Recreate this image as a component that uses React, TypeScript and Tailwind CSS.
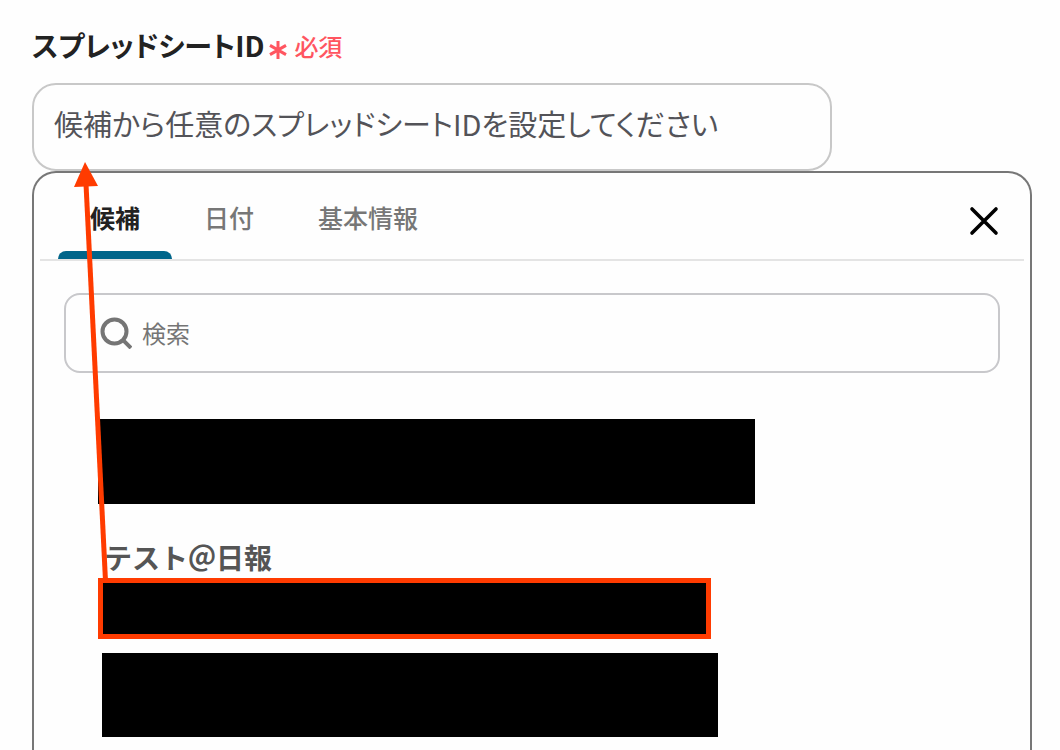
import React, { useState } from 'react';

const tabs = ['候補', '日付', '基本情報'];

const SearchIcon: React.FC = () => (
  <svg className="size-8 shrink-0 text-[#757575]" viewBox="0 0 32 32" fill="none" stroke="currentColor" strokeWidth="4" aria-hidden="true">
    <circle cx="14.5" cy="14.5" r="12" />
    <path d="M22.6 22.6 L31 31" />
  </svg>
);

const CloseIcon: React.FC = () => (
  <svg className="size-8" viewBox="0 0 32 32" fill="none" stroke="currentColor" strokeWidth="3.6" strokeLinecap="round" aria-hidden="true">
    <path d="M4 4 L28 28 M28 4 L4 28" />
  </svg>
);

const RequiredMark: React.FC = () => (
  <svg className="mt-2 size-5" viewBox="0 0 20 20" fill="none" stroke="currentColor" strokeWidth="3" aria-hidden="true">
    <path d="M10 1 V19 M2 5.4 L18 14.6 M18 5.4 L2 14.6" />
  </svg>
);

// Points from the highlighted candidate up to the ID field
const Arrow: React.FC = () => (
  <svg className="pointer-events-none absolute left-[72px] top-40 z-10" width="40" height="424" viewBox="0 0 40 424" aria-hidden="true">
    <path d="M14 24 L33.5 421" stroke="#ff3b00" strokeWidth="5" />
    <path d="M13 2 L2 27 L26 26 Z" fill="#ff3b00" />
  </svg>
);

const App: React.FC = () => {
  const [active, setActive] = useState('候補');

  return (
    <main className="relative flex h-screen flex-col overflow-hidden bg-[#fefefe] pl-8 pr-7 pt-6 font-['Noto_Sans_CJK_JP',sans-serif]">
      <Arrow />

      {/* Field label */}
      <div className="flex h-11 items-center gap-1">
        <label htmlFor="sheet-id" className="pb-0.5 text-[28px] leading-10 font-bold text-[#222] [font-feature-settings:'palt']">
          スプレッドシートID
        </label>
        <span className="flex items-center gap-1.5 text-2xl font-medium text-[#ff5560]">
          <RequiredMark />
          必須
        </span>
      </div>

      <input
        id="sheet-id"
        type="text"
        placeholder="候補から任意のスプレッドシートIDを設定してください"
        className="mt-[15px] h-[88px] w-4/5 shrink-0 rounded-3xl border-2 border-[#c8c8c8] px-5 pb-2 text-[29px] text-[#535358] outline-none placeholder:text-[#535358] [font-feature-settings:'palt']"
      />

      {/* Candidate panel */}
      <section className="min-h-0 flex-1 rounded-t-3xl border-2 border-b-0 border-[#777]">
        <div className="mx-1.5 flex items-stretch justify-between border-b-2 border-[#e4e4e4] pl-[18px] pr-6">
          <div role="tablist" className="flex">
            {tabs.map((tab) => (
              <button
                key={tab}
                type="button"
                role="tab"
                aria-selected={active === tab}
                onClick={() => setActive(tab)}
                className={`flex h-[86px] flex-col text-[25px] ${active === tab ? 'font-bold text-[#222]' : 'font-medium text-[#777]'}`}
              >
                <span className="flex flex-1 items-center px-8 pt-3">{tab}</span>
                <span className={`h-2 w-full rounded-t-lg ${active === tab ? 'bg-[#00658a]' : ''}`} />
              </button>
            ))}
          </div>
          <button type="button" aria-label="閉じる" className="pt-2.5 text-black">
            <CloseIcon />
          </button>
        </div>

        <div className="mx-[30px] mt-8 flex h-20 items-center gap-2.5 rounded-2xl border-2 border-[#c8c8cb] px-[34px]">
          <SearchIcon />
          <input
            type="search"
            aria-label="検索"
            placeholder="検索"
            className="min-w-0 flex-1 text-2xl text-[#757575] outline-none placeholder:text-[#757575]"
          />
        </div>

        {/* Candidates, with the account details masked */}
        <ul className="mt-[46px] pl-16">
          <li className="h-[85px] w-[657px] max-w-full bg-black" />
          <li className="pt-8">
            <p className="pl-1.5 text-[28px] leading-[42px] font-bold text-[#555]">テスト＠日報</p>
            <div className="h-[61px] w-[613px] max-w-full border-5 border-[#ff3b00] bg-black" />
          </li>
          <li className="ml-1 mt-3.5 h-[84px] w-[616px] max-w-full bg-black" />
        </ul>
      </section>
    </main>
  );
};

export default App;
